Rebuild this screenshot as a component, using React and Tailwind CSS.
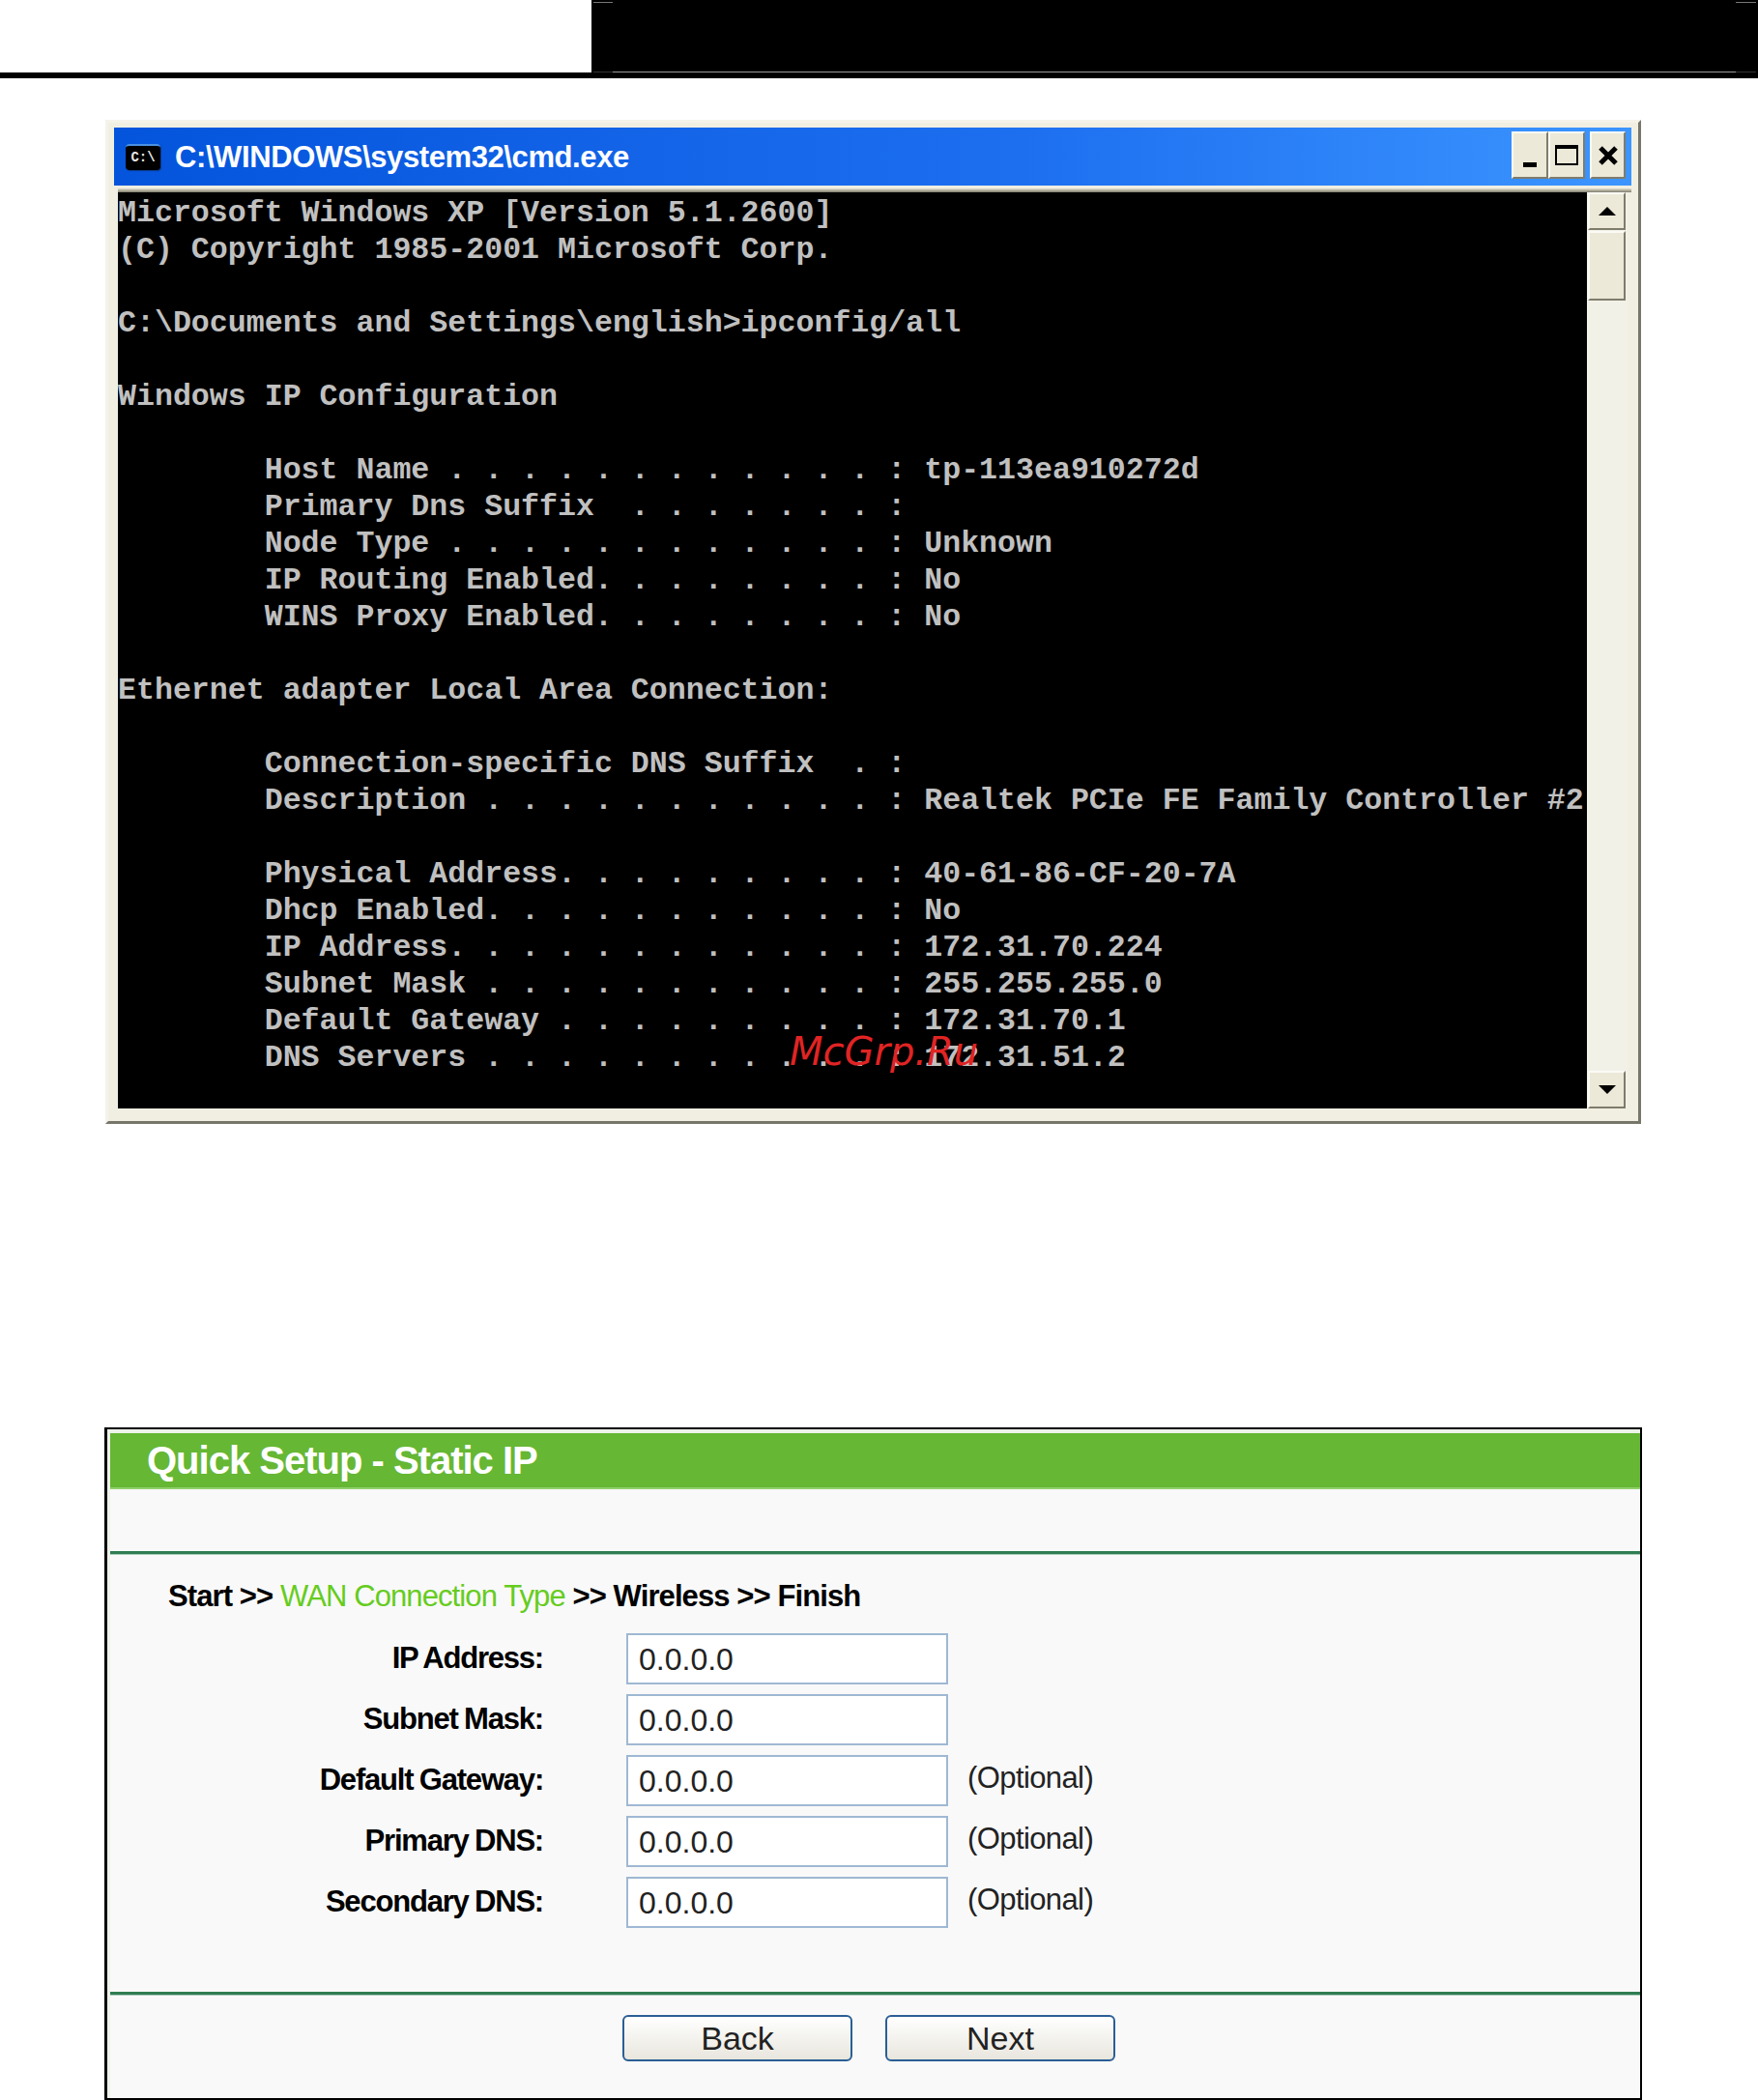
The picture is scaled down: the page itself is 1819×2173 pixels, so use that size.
import React from "react";

const consoleLines = [
  "Microsoft Windows XP [Version 5.1.2600]",
  "(C) Copyright 1985-2001 Microsoft Corp.",
  "",
  "C:\\Documents and Settings\\english>ipconfig/all",
  "",
  "Windows IP Configuration",
  "",
  "        Host Name . . . . . . . . . . . . : tp-113ea910272d",
  "        Primary Dns Suffix  . . . . . . . :",
  "        Node Type . . . . . . . . . . . . : Unknown",
  "        IP Routing Enabled. . . . . . . . : No",
  "        WINS Proxy Enabled. . . . . . . . : No",
  "",
  "Ethernet adapter Local Area Connection:",
  "",
  "        Connection-specific DNS Suffix  . :",
  "        Description . . . . . . . . . . . : Realtek PCIe FE Family Controller #2",
  "",
  "        Physical Address. . . . . . . . . : 40-61-86-CF-20-7A",
  "        Dhcp Enabled. . . . . . . . . . . : No",
  "        IP Address. . . . . . . . . . . . : 172.31.70.224",
  "        Subnet Mask . . . . . . . . . . . : 255.255.255.0",
  "        Default Gateway . . . . . . . . . : 172.31.70.1",
  "        DNS Servers . . . . . . . . . . . : 172.31.51.2",
];

const fields = [
  { label: "IP Address:", optional: false },
  { label: "Subnet Mask:", optional: false },
  { label: "Default Gateway:", optional: true },
  { label: "Primary DNS:", optional: true },
  { label: "Secondary DNS:", optional: true },
];

const bevel =
  "bg-[#ece9d8] border-2 border-t-[#fbfaf5] border-l-[#fbfaf5] border-r-[#7f7c6c] border-b-[#7f7c6c]";

function CmdIcon() {
  return (
    <div className="w-9 h-[27px] shrink-0 bg-black border-t-2 border-[#4a90e2] rounded-sm flex items-center justify-center shadow-[1px_1px_1px_#0a3a8a]">
      <span className="font-['Liberation_Mono',monospace] font-bold text-[14px] leading-none text-[#e8e8e8]">C:\</span>
    </div>
  );
}

function TitleButton({ className, children }) {
  return (
    <div className={`h-[49px] flex items-center justify-center ${bevel} ${className}`}>
      {children}
    </div>
  );
}

function CmdWindow() {
  return (
    <div className="relative ml-[109px] mt-[43px] w-[1589px] h-[1039px] bg-[#f1efe2] border-[3px] border-t-[#f5f3ea] border-l-[#f5f3ea] border-r-[#77766a] border-b-[#77766a] pt-[5px] pl-[6px] pr-[7px]">
      <div className="h-[60px] bg-gradient-to-r from-[#0454dc] via-[#1d6ff0] via-60% to-[#3c95ff] flex items-center pl-3 pr-[6px]">
        <CmdIcon />
        <span className="ml-[15px] font-['Liberation_Sans',sans-serif] font-bold text-[31px] leading-none text-white tracking-[-0.4px]">
          C:\WINDOWS\system32\cmd.exe
        </span>
        <div className="ml-auto flex -mt-[3px]">
          <TitleButton className="w-[38px]">
            <div className="w-[14px] h-[5px] bg-black mt-[19px]"></div>
          </TitleButton>
          <TitleButton className="w-[38px]">
            <div className="w-6 h-[21px] border-2 border-t-[4px] border-black"></div>
          </TitleButton>
          <TitleButton className="w-[37px] ml-[5px]">
            <svg width="22" height="22" viewBox="0 0 22 22">
              <path d="M3 3L19 19M19 3L3 19" stroke="#000" strokeWidth="5" />
            </svg>
          </TitleButton>
        </div>
      </div>
      <div className="mt-[3px] h-1 ml-[4px] bg-gradient-to-b from-[#e6e3d2] to-[#7f7c6c]"></div>
      <div className="ml-[4px] flex h-[948px]">
        <div className="relative w-[1520px] bg-black overflow-hidden pt-[3px]">
          <pre className="font-['Liberation_Mono',monospace] font-bold text-[31.6px] leading-[38px] text-[#c0c0c0]">
            {consoleLines.join("\n")}
          </pre>
          <span className="absolute left-[695px] top-[867px] font-['DejaVu_Sans',sans-serif] italic text-[40px] leading-[44px] text-[#e02424]">
            McGrp.Ru
          </span>
        </div>
        <div className="w-[42px] flex flex-col bg-[#f2f1e8] pl-px pr-[2px]">
          <div className={`h-[39px] flex items-center justify-center ${bevel}`}>
            <div className="w-0 h-0 border-x-[9px] border-x-transparent border-b-[9px] border-b-black"></div>
          </div>
          <div className={`h-[72px] mt-px ${bevel}`}></div>
          <div className={`h-[39px] mt-auto flex items-center justify-center ${bevel}`}>
            <div className="w-0 h-0 border-x-[9px] border-x-transparent border-t-[9px] border-t-black"></div>
          </div>
        </div>
      </div>
    </div>
  );
}

function FieldRow({ label, optional }) {
  return (
    <div className="flex items-center h-[53px] mb-[10px]">
      <div className="w-[448px] text-right font-bold text-[31px] tracking-[-1.2px] [word-spacing:-1px] text-black">{label}</div>
      <div className="ml-[86px] w-[333px] h-[53px] bg-white border-2 border-[#9fb8d3] flex items-center pl-[11px] text-[32px] text-[#222]">
        0.0.0.0
      </div>
      {optional && <span className="ml-[20px] -mt-[5px] text-[31px] tracking-[-0.6px] text-[#222]">(Optional)</span>}
    </div>
  );
}

function Divider() {
  return <div className="h-1 bg-[#2f7d52] border-b border-[#a9ccb8]"></div>;
}

function QuickSetup() {
  return (
    <div className="ml-[108px] mt-[314px] w-[1591px] h-[696px] bg-[#eef3ea] border-t-2 border-l-[3px] border-r-2 border-b-2 border-black pt-1 font-['Liberation_Sans',sans-serif]">
      <div className="ml-[3px] h-[58px] bg-[#66b734] border-b-2 border-[#8fd06a] flex items-center pl-[38px] text-white font-bold text-[40px] tracking-[-1px]">
        Quick Setup - Static IP
      </div>
      <div className="ml-[3px] bg-[#f9f9f9] h-[630px] pt-[64px]">
        <Divider />
        <div className="mt-[23px] ml-[60px] h-10 flex items-center text-[31px] font-bold text-black tracking-[-0.9px] whitespace-pre">
          Start &gt;&gt; <span className="font-normal text-[#66cc1e]">WAN Connection Type</span> &gt;&gt; Wireless &gt;&gt; Finish
        </div>
        <div className="mt-[18px]">
          {fields.map((f) => (
            <FieldRow key={f.label} label={f.label} optional={f.optional} />
          ))}
        </div>
        <div className="mt-[66px]">
          <Divider />
        </div>
        <div className="mt-5 ml-[530px] flex gap-[34px]">
          <button className="w-[238px] h-[48px] rounded-md border-2 border-[#2a5f95] bg-gradient-to-b from-white to-[#e8e6dd] text-[34px] leading-none text-[#222]">Back</button>
          <button className="w-[238px] h-[48px] rounded-md border-2 border-[#2a5f95] bg-gradient-to-b from-white to-[#e8e6dd] text-[34px] leading-none text-[#222]">Next</button>
        </div>
      </div>
    </div>
  );
}

export default function App() {
  return (
    <div className="w-[1819px] h-[2173px] bg-white overflow-hidden">
      <div className="h-[81px] border-b-[6px] border-black flex">
        <div className="w-[612px]"></div>
        <div className="flex-1 bg-black flex flex-col justify-between pt-[2px] pl-[2px] pr-[2px]">
          <div className="h-px flex justify-between">
            <div className="w-5 bg-[#777]"></div>
            <div className="w-[21px] bg-[#777]"></div>
          </div>
          <div className="h-px flex">
            <div className="w-5 bg-[#333]"></div>
            <div className="flex-1 bg-[#999]"></div>
            <div className="w-[21px] bg-[#333]"></div>
          </div>
        </div>
      </div>
      <CmdWindow />
      <QuickSetup />
    </div>
  );
}
